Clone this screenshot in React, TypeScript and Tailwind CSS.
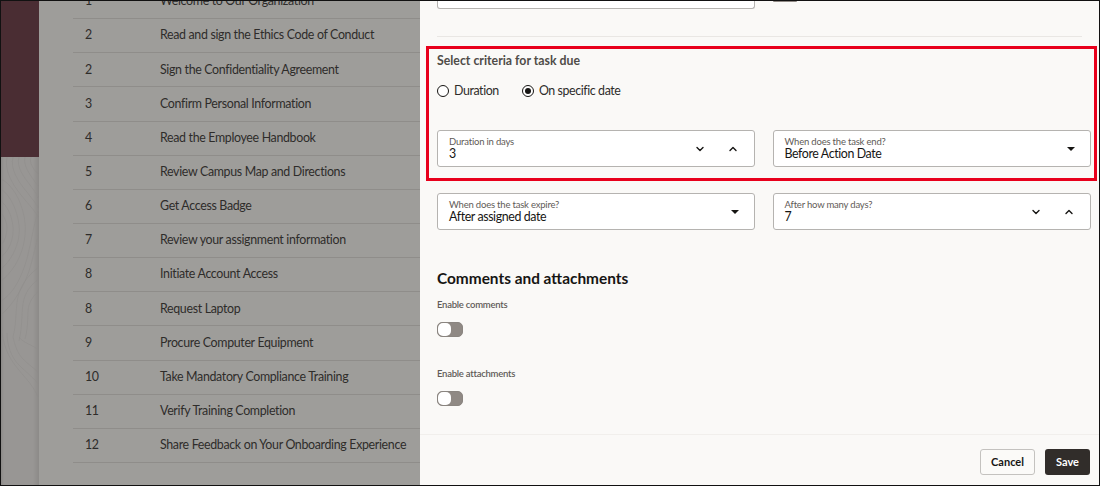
import { ChevronDown, ChevronUp } from 'lucide-react'

const tasks = [
  ['1', 'Welcome to Our Organization'],
  ['2', 'Read and sign the Ethics Code of Conduct'],
  ['2', 'Sign the Confidentiality Agreement'],
  ['3', 'Confirm Personal Information'],
  ['4', 'Read the Employee Handbook'],
  ['5', 'Review Campus Map and Directions'],
  ['6', 'Get Access Badge'],
  ['7', 'Review your assignment information'],
  ['8', 'Initiate Account Access'],
  ['8', 'Request Laptop'],
  ['9', 'Procure Computer Equipment'],
  ['10', 'Take Mandatory Compliance Training'],
  ['11', 'Verify Training Completion'],
  ['12', 'Share Feedback on Your Onboarding Experience'],
]

const Contours = () => (
  <svg viewBox="0 0 38 328" className="h-full w-full" fill="none" stroke="#8e8c8a" strokeWidth="0.5">
    <path d="M6 0c-3 14 6 28 14 38s16 18 18 24" />
    <path d="M12 0c-3 12 5 24 13 34s11 14 13 18" />
    <path d="M18 0c-3 10 5 20 11 28s7 10 9 14" />
    <path d="M24 0c-2 8 4 16 8 22s4 6 6 8" />
    <path d="M30 0c-2 6 2 12 8 18" />
    <path d="M0 22c12 6 22 24 24 44s-6 44-24 58" />
    <path d="M0 32c9 6 16 20 18 36s-6 34-18 44" />
    <path d="M0 44c6 5 11 14 12 26s-4 24-12 30" />
    <path d="M0 56c3 3 6 9 6 15s-2 13-6 17" />
    <path d="M38 52c-6 16-8 38-14 56s-14 30-24 36" />
    <path d="M38 76c-4 14-6 26-10 38s-14 32-28 44" />
    <path d="M38 110c-8 6-16 14-20 26s-2 30-6 44" />
    <path d="M38 122c-6 4-12 10-15 20s-1 26-5 42" />
    <path d="M38 134c-4 3-8 8-10 14s0 20-4 34" />
    <path d="M18 180c4 6 14 8 18 12" />
    <path d="M12 180c2 8 4 16 10 22s12 10 16 14" />
    <path d="M6 176c0 12 4 24 12 32s16 14 20 20" />
    <path d="M1 170c0 16 6 30 16 42s16 18 21 30" />
  </svg>
)

const FloatField = ({ label, value, kind }: { label: string; value: string; kind: 'select' | 'number' }) => (
  <div className="flex h-[37px] w-[318px] shrink-0 items-center justify-between rounded-[3px] border border-[#b5b3b0] bg-white px-[11px]">
    <div className="flex flex-col">
      <span className="text-[9.5px] leading-[11px] tracking-[-0.2px] text-[#5f5b57]">{label}</span>
      <span className="text-[12.4px] leading-[14px] tracking-[-0.4px] text-[#161513]">{value}</span>
    </div>
    {kind === 'select' ? (
      <svg viewBox="0 0 8 4" className="mr-[4px] h-[4px] w-[8px]"><path d="M0 0h8L4 4z" fill="#161513" /></svg>
    ) : (
      <div className="flex items-center gap-[21px] pr-[4px]">
        <ChevronDown size={12} strokeWidth={2.8} color="#161513" />
        <ChevronUp size={12} strokeWidth={2.8} color="#161513" />
      </div>
    )}
  </div>
)

const Toggle = () => (
  <div className="flex h-[15px] w-[26px] items-center rounded-[5px] border border-[#8a8580] bg-[#8f8984]">
    <span className="h-[13px] w-[13px] rounded-[5px] bg-white" />
  </div>
)

export default function App() {
  return (
    <div className="flex h-[486px] w-[1100px] overflow-hidden border border-[#111] bg-[#9e9d9a] [font-family:Lato,sans-serif]">
      {/* strip on the far left */}
      <div className="flex h-full w-[38px] shrink-0 flex-col">
        <div className="h-[156px] bg-[#4a2d33]" />
        <div className="flex-1 bg-[linear-gradient(to_right,#8c8a88_0px,#989694_3px,#989694_32px,#8c8a88_38px)]">
          <Contours />
        </div>
      </div>

      {/* task list behind the drawer */}
      <div className="h-full w-[381px] shrink-0 overflow-hidden pl-[34px]">
        <ul className="-mt-[16px]">
          {tasks.map(([num, name], i) => (
            <li key={i} className="flex h-[34.15px] items-center border-b border-[#8f8d8a] text-[12.4px] tracking-[-0.33px] text-[#2e2c2a]">
              <span className="w-[87px] shrink-0 pl-[12px]">{num}</span>
              <span className="whitespace-nowrap">{name}</span>
            </li>
          ))}
        </ul>
      </div>

      {/* drawer */}
      <div className="flex h-full min-w-0 flex-1 flex-col bg-[#faf9f7]">
        <div className="flex-1 overflow-hidden px-[17px]">
          <div className="flex items-start gap-[17.5px]">
            <div className="h-[8px] w-[318px] rounded-b-[3px] border border-t-0 border-[#b5b3b0] bg-white" />
            <div className="h-[1px] w-[24px] rounded-b-[3px] bg-[#8f8984]" />
          </div>
          <div className="mt-[27px] h-px bg-[#e9e7e4]" />

          <div className="-mx-[11px] mt-[9px] h-[135px] w-[671px] border-[3px] border-[#e8001c] px-[8px] pt-[4px]">
            <h3 className="text-[12.3px] font-bold leading-[16px] text-[#4f4c48]">Select criteria for task due</h3>
            <div className="mt-[13px] flex h-[18px] items-center text-[12.4px] tracking-[-0.4px] text-[#2e2c2a]">
              <span className="mr-[5px] h-[12px] w-[12px] rounded-full border border-[#161513] bg-white" />
              <span className="mr-[23px]">Duration</span>
              <span className="mr-[5px] flex h-[12px] w-[12px] items-center justify-center rounded-full border border-[#161513] bg-white">
                <span className="h-[6px] w-[6px] rounded-full bg-[#161513]" />
              </span>
              <span>On specific date</span>
            </div>
            <div className="mt-[30px] flex gap-[17.5px]">
              <FloatField label="Duration in days" value="3" kind="number" />
              <FloatField label="When does the task end?" value="Before Action Date" kind="select" />
            </div>
          </div>

          <div className="mt-[12px] flex gap-[17.5px]">
            <FloatField label="When does the task expire?" value="After assigned date" kind="select" />
            <FloatField label="After how many days?" value="7" kind="number" />
          </div>

          <h2 className="mt-[37px] text-[15.4px] font-bold leading-[22px] text-[#161513]">Comments and attachments</h2>

          <p className="mt-[9px] text-[9.5px] font-semibold leading-[14px] tracking-[-0.25px] text-[#5f5b57]">Enable comments</p>
          <div className="mt-[10px]"><Toggle /></div>
          <p className="mt-[30px] text-[9.5px] font-semibold leading-[14px] tracking-[-0.25px] text-[#5f5b57]">Enable attachments</p>
          <div className="mt-[10px]"><Toggle /></div>
        </div>

        <div className="flex h-[51px] items-start justify-end gap-[10px] border-t border-[#f1efec] pr-[9px] pt-[14px]">
          <button className="h-[26px] w-[55px] rounded-[3px] border border-[#c4c2bf] bg-[#fbfaf8] text-[11px] font-bold text-[#161513]">Cancel</button>
          <button className="h-[26px] w-[45px] rounded-[3px] bg-[#312d2a] text-[11px] font-bold text-white">Save</button>
        </div>
      </div>
    </div>
  )
}
